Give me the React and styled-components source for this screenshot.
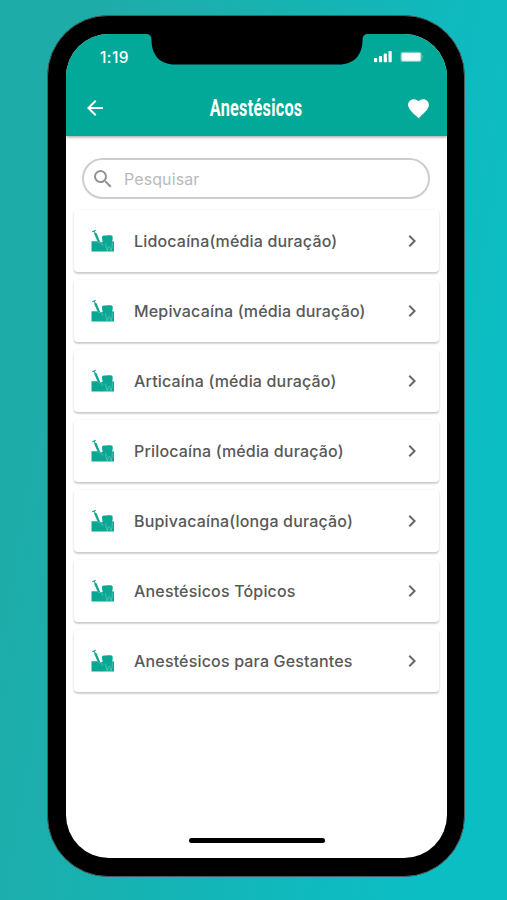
import React, { useState } from 'react';
import styled, { createGlobalStyle } from 'styled-components';
import {
  MdArrowBack,
  MdFavorite,
  MdSearch,
  MdChevronRight,
} from 'react-icons/md';

const items = [
  { id: 1, name: 'Lidocaína(média duração)' },
  { id: 2, name: 'Mepivacaína (média duração)' },
  { id: 3, name: 'Articaína (média duração)' },
  { id: 4, name: 'Prilocaína (média duração)' },
  { id: 5, name: 'Bupivacaína(longa duração)' },
  { id: 6, name: 'Anestésicos Tópicos' },
  { id: 7, name: 'Anestésicos para Gestantes' },
];

function ToothIcon() {
  return (
    <svg width="25" height="24" viewBox="0 0 25 24" fill="#0aa894">
      <path d="M2 2.200L5.800.7l.3.900-1.300.500.6 1.700 1.200.500 3.600 8.700H7.800L4.200 5.100l.3-.8-.6-1.500-1.500.5z" />
      <path d="M1.500 12.200H7.200l.9.800H12v9.500H1.500z" />
      <path d="M12 8q0-1.700 1.800-1.600 1.700.3 3.300-.1 1.700-.3 3.700 0 2 0 1.900 1.700 0 2.800-.5 5.100H12.900q-1-2.200-.9-5.100z" />
      <path d="M11.600 12.800h10.300l2.100-.6v10.300H11.600z" />
      <path
        d="M15.600 14.500q.3 4.500 1.800 7.300 1-4.600 1.800-4.600.9.200 1.900 4.600 1.300-3 1.300-8M8.300 13.600l3.300.1 1 3"
        fill="none"
        stroke="#8fd5cb"
        strokeWidth="0.5"
      />
    </svg>
  );
}

function App() {
  const [search, setSearch] = useState('');

  const list = items.filter((item) =>
    item.name.toLowerCase().includes(search.toLowerCase()),
  );

  return (
    <StyledPage>
      <GlobalStyle />
      <StyledPhone>
        <StyledScreen>
          <StyledHeader>
            <StyledNotch width="220" height="31" viewBox="0 0 220 31">
              <path d="M0 0Q4.500 .3 4.500 6C4.500 21 13 30.500 28 30.500H192C207 30.500 215.500 21 215.500 6Q215.500 .3 220 0z" />
            </StyledNotch>
            <StyledStatus>
              <span>1:19</span>
              <svg width="52" height="14" viewBox="0 0 52 14" fill="#fff">
                <rect x="0" y="8" width="3.200" height="4.300" rx="0.800" />
                <rect x="4.900" y="6" width="3.200" height="6.300" rx="0.800" />
                <rect x="9.700" y="3.600" width="3.200" height="8.700" rx="0.800" />
                <rect x="14.500" y="1" width="3.200" height="11.300" rx="0.800" />
                <rect
                  x="26.500"
                  y="1.700"
                  width="21"
                  height="10.300"
                  rx="2.500"
                  opacity="0.45"
                />
                <rect x="27.800" y="3" width="18.600" height="7.700" rx="1" />
                <path d="M48.500 5q1.600 1.700 0 3.400z" opacity="0.5" />
              </svg>
            </StyledStatus>
            <StyledToolbar>
              <button type="button" aria-label="Voltar">
                <MdArrowBack size={24} />
              </button>
              <h1>Anestésicos</h1>
              <button type="button" aria-label="Favorito">
                <MdFavorite size={25} />
              </button>
            </StyledToolbar>
          </StyledHeader>

          <StyledSearch>
            <MdSearch size={24} />
            <input
              value={search}
              onChange={(e) => setSearch(e.target.value)}
              placeholder="Pesquisar"
            />
          </StyledSearch>

          <StyledList>
            {list.map((item) => (
              <StyledCard key={item.id}>
                <ToothIcon />
                <p>{item.name}</p>
                <MdChevronRight size={24} />
              </StyledCard>
            ))}
          </StyledList>

          <StyledHomeBar />
        </StyledScreen>
      </StyledPhone>
    </StyledPage>
  );
}

export default App;

const GlobalStyle = createGlobalStyle`
  * {
    box-sizing: border-box;
  }
  body {
    margin: 0;
    font-family: Inter, 'Liberation Sans', sans-serif;
  }
  button {
    display: flex;
    padding: 0;
    border: 0;
    background: none;
    color: #fff;
  }
`;

const StyledPage = styled.div`
  height: 900px;
  padding: 15px 42px 0 47px;
  overflow: hidden;
  background: linear-gradient(100deg, #1eaca8 16%, #0bbec4 86%);
`;

const StyledPhone = styled.div`
  height: 862px;
  padding: 18px 17px 18px 18px;
  border: 1px solid #4d5c5c;
  border-radius: 61px;
  background: #000;
`;

const StyledScreen = styled.div`
  display: flex;
  flex-direction: column;
  height: 824px;
  overflow: hidden;
  border-radius: 43px;
  background: #fff;
`;

const StyledHeader = styled.div`
  position: relative;
  flex: none;
  height: 102px;
  background: #02a998;
  box-shadow: 0 1px 3px rgba(0, 0, 0, 0.4);
`;

const StyledNotch = styled.svg`
  position: absolute;
  top: 0;
  left: 81px;
`;

const StyledStatus = styled.div`
  display: flex;
  align-items: center;
  justify-content: space-between;
  height: 46px;
  padding: 0 21px 0 34px;
  color: #fff;
  font-size: 15.5px;
  font-weight: 500;
  letter-spacing: 0.4px;
`;

const StyledToolbar = styled.div`
  display: flex;
  align-items: center;
  justify-content: space-between;
  height: 56px;
  padding: 0 16px 0 17px;
  h1 {
    margin: 0;
    color: #fff;
    font-family: 'Roboto', sans-serif;
    font-size: 23.5px;
    font-weight: 700;
    letter-spacing: 0.4px;
    transform: scaleX(0.69);
  }
`;

const StyledSearch = styled.div`
  display: flex;
  flex: none;
  align-items: center;
  height: 41px;
  margin: 22px 17px 0 16px;
  padding-left: 7px;
  border: 2px solid #cdcdcf;
  border-radius: 21px;
  color: #929292;
  input {
    flex: 1;
    min-width: 0;
    padding: 0 0 0 9px;
    border: 0;
    outline: 0;
    background: none;
    font-family: inherit;
    font-size: 16px;
    letter-spacing: 0.1px;
    &::placeholder {
      color: #b9b9bb;
      opacity: 1;
    }
  }
`;

const StyledList = styled.div`
  display: flex;
  flex-direction: column;
  gap: 8px;
  padding: 11px 8px;
`;

const StyledCard = styled.div`
  display: flex;
  align-items: center;
  height: 62px;
  padding: 0 15px 0 16px;
  border-radius: 4px;
  background: #fff;
  box-shadow:
    0 1px 3px rgba(0, 0, 0, 0.14),
    0 1.5px 1.5px rgba(0, 0, 0, 0.12);
  color: #686868;
  p {
    flex: 1;
    margin: 0 0 0 19px;
    color: #585858;
    font-size: 16px;
    font-weight: 500;
    letter-spacing: 0.17px;
    white-space: nowrap;
  }
`;

const StyledHomeBar = styled.div`
  align-self: center;
  width: 136px;
  height: 5px;
  margin-top: auto;
  margin-bottom: 15px;
  border-radius: 3px;
  background: #000;
`;
